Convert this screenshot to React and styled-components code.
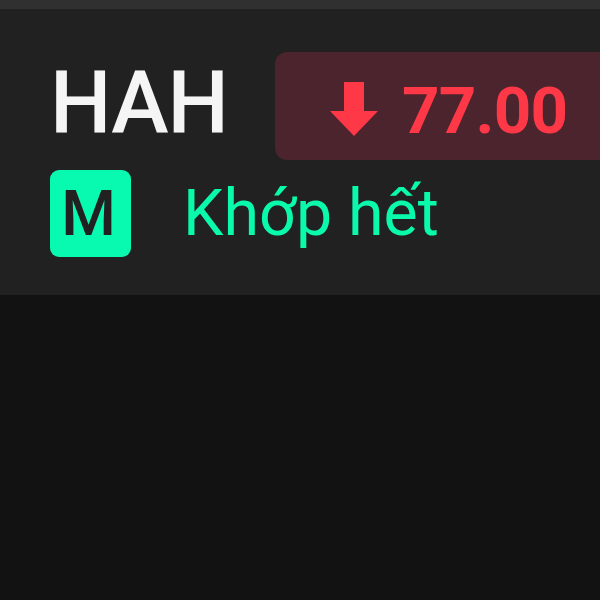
import React from "react";
import styled, { createGlobalStyle } from "styled-components";

const GlobalStyle = createGlobalStyle`
  body {
    margin: 0;
    background: #121212;
    font-family: Roboto, "Noto Sans", sans-serif;
    overflow: hidden;
  }
`;

const Screen = styled.div`
  width: 600px;
  height: 600px;
  overflow: hidden;
  background: #121212;
`;

const OrderCard = styled.div`
  height: 295px;
  box-sizing: border-box;
  border-top: 9px solid #303030;
  padding: 43px 0 0 50px;
  background: #212121;
`;

const QuoteRow = styled.div`
  display: flex;
  align-items: flex-start;
  height: 118px;
`;

const Symbol = styled.div`
  width: 225px;
  flex-shrink: 0;
  box-sizing: border-box;
  padding-top: 6px;
  font-size: 86.5px;
  line-height: 92px;
  font-weight: 500;
  letter-spacing: -1px;
  color: #f5f5f5;
`;

const PriceTag = styled.div`
  display: flex;
  align-items: center;
  width: 345px;
  height: 108px;
  flex-shrink: 0;
  box-sizing: border-box;
  padding: 6px 0 0 55px;
  border-radius: 12px;
  background: #4c242e;
  color: #ff3848;
`;

const Price = styled.span`
  padding-top: 4px;
  margin-left: 24px;
  font-size: 65.5px;
  line-height: 80px;
  font-weight: 700;
  letter-spacing: -0.8px;
`;

const StatusRow = styled.div`
  display: flex;
  align-items: flex-start;
`;

const SideBadge = styled.div`
  width: 81px;
  height: 87px;
  box-sizing: border-box;
  padding-right: 4px;
  border-radius: 9px;
  background: #07fab0;
  color: #212121;
  font-size: 62.5px;
  line-height: 87px;
  font-weight: 500;
  text-align: center;
`;

const Status = styled.span`
  margin-left: 52px;
  font-size: 64.5px;
  line-height: 87px;
  color: #0afaac;
`;

function ArrowDown() {
  return (
    <svg width="48" height="54" viewBox="0 0 48 54" fill="currentColor">
      <path d="M14 0H34V29H48L24 54L0 29H14Z" />
    </svg>
  );
}

export default function App() {
  return (
    <Screen>
      <GlobalStyle />
      <OrderCard>
        <QuoteRow>
          <Symbol>HAH</Symbol>
          <PriceTag>
            <ArrowDown />
            <Price>77.00</Price>
          </PriceTag>
        </QuoteRow>
        <StatusRow>
          <SideBadge>M</SideBadge>
          <Status>Khớp hết</Status>
        </StatusRow>
      </OrderCard>
    </Screen>
  );
}
